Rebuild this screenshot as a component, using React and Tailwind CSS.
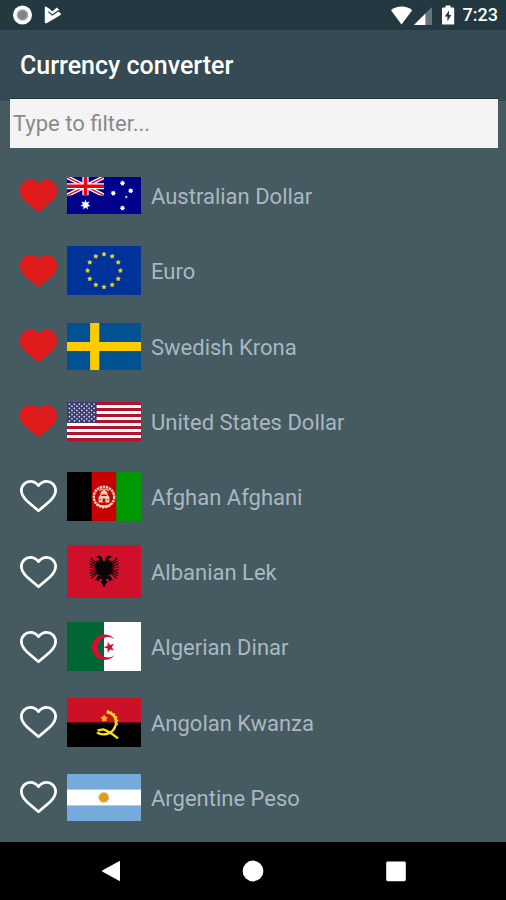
import { useState } from "react";

const starPoints = (cx, cy, r, inner = 0.4, n = 5, turn = -90) =>
  Array.from({ length: n * 2 }, (_, i) => {
    const a = ((turn + (i * 180) / n) * Math.PI) / 180;
    const d = i % 2 ? r * inner : r;
    return `${(cx + d * Math.cos(a)).toFixed(2)},${(cy + d * Math.sin(a)).toFixed(2)}`;
  }).join(" ");

const Flag = ({ h, children }) => (
  <svg viewBox={`0 0 74 ${h}`} width="74" height={h} className="shrink-0" aria-hidden="true">
    {children}
  </svg>
);

const Australia = () => (
  <Flag h={37}>
    <rect width="74" height="37" fill="#00008b" />
    <svg width="37" height="18.5" viewBox="0 0 37 18.5">
      <path d="M0 0 37 18.5M37 0 0 18.5" stroke="#fff" strokeWidth="4" />
      <path d="M0 0 37 18.5M37 0 0 18.5" stroke="#f00020" strokeWidth="1.4" />
      <path d="M18.5 0V18.5M0 9.25H37" stroke="#fff" strokeWidth="6.2" />
      <path d="M18.5 0V18.5M0 9.25H37" stroke="#f00010" strokeWidth="3.6" />
    </svg>
    <polygon points={starPoints(18.5, 27.8, 5.2, 0.5, 7)} fill="#fff" />
    <polygon points={starPoints(55.5, 6.2, 2.7, 0.65, 7)} fill="#fff" />
    <polygon points={starPoints(46.3, 16.2, 2.7, 0.65, 7)} fill="#fff" />
    <polygon points={starPoints(63.7, 13.8, 2.7, 0.65, 7)} fill="#fff" />
    <polygon points={starPoints(55.5, 31, 2.7, 0.65, 7)} fill="#fff" />
    <polygon points={starPoints(59.3, 20, 1.7)} fill="#fff" />
  </Flag>
);

const Europe = () => (
  <Flag h={49}>
    <rect width="74" height="49" fill="#003399" />
    {Array.from({ length: 12 }, (_, i) => {
      const a = (i * Math.PI) / 6;
      return (
        <polygon
          key={i}
          points={starPoints(37 + 16.4 * Math.sin(a), 24.6 - 16.4 * Math.cos(a), 2.6, 0.65)}
          fill="#dcc634"
        />
      );
    })}
  </Flag>
);

const Sweden = () => (
  <Flag h={47}>
    <rect width="74" height="47" fill="#005293" />
    <path d="M27.7 0V47M0 23.5H74" stroke="#fecb00" strokeWidth="9.2" />
  </Flag>
);

const UnitedStates = () => (
  <Flag h={39}>
    <rect width="74" height="39" fill="#fff" />
    {[0, 6, 12, 18, 24, 30, 36].map((y) => (
      <rect key={y} y={y} width="74" height="3" fill="#b2122c" />
    ))}
    <rect width="29.6" height="21" fill="#3c3b6e" />
    {Array.from({ length: 9 }, (_, r) =>
      Array.from({ length: r % 2 ? 5 : 6 }, (_, c) => (
        <circle
          key={`${r}-${c}`}
          cx={2.5 + c * 4.92 + (r % 2 ? 2.46 : 0)}
          cy={2.1 + r * 2.1}
          r="0.85"
          fill="#d8d8ea"
        />
      )),
    )}
  </Flag>
);

const Afghanistan = () => (
  <Flag h={49}>
    <rect width="25" height="49" fill="#000" />
    <rect x="24.7" width="24.8" height="49" fill="#c80000" />
    <rect x="49.3" width="24.7" height="49" fill="#009a00" />
    <g fill="none" stroke="#f6d5bd">
      <circle cx="37" cy="25" r="10.2" strokeWidth="2.4" strokeDasharray="2.4 0.7" />
      <path d="M30 31.5C32 35 42 35 44 31.5" strokeWidth="1.8" />
      <path d="M32 19C34 16.4 40 16.4 42 19" strokeWidth="1.1" />
    </g>
    <path
      d="M37 17.8C39.8 19 41 21 40.6 23L42.4 25V30.5H31.6V25L33.4 23C33 21 34.2 19 37 17.8Z"
      fill="#f6d5bd"
    />
    <path d="M35.6 30.5V26.6H38.4V30.5ZM34.4 22.6H39.6V24H34.4Z" fill="#c80000" />
    <path d="M32.6 27.6H34.2M39.8 27.6H41.4" stroke="#c80000" strokeWidth="1" />
  </Flag>
);

const Albania = () => (
  <Flag h={53}>
    <rect width="74" height="53" fill="#d0102a" />
    <g fill="#0a0205">
      <path d="M37 17.2 35.6 14.8 35 12 32.2 10.4 28.6 12 31 12.8 32.6 14.4 31 16 28.6 15.4 29.2 18 28.6 20 28.6 27 31 29.4 34.2 31 33.4 33.6 35.4 34.6 33.4 37.2 35 38.6 37 42.6 39 38.6 40.6 37.2 38.6 34.6 40.6 33.6 39.8 31 43 29.4 45.4 27 45.4 20 44.8 18 45.4 15.4 43 16 41.4 14.4 43 12.8 45.4 12 41.8 10.4 39 12 38.4 14.8Z" />
      <path d="M31.4 30 28 35.4 30.2 34.8 30.8 37 34.6 32ZM42.6 30 46 35.4 43.8 34.8 43.2 37 39.4 32Z" />
    </g>
    <g stroke="#0a0205" strokeWidth="1.2">
      <path d="M28.8 17.6 23.6 13M28.8 19.6 22.8 16M28.8 21.4 22.6 19M28.8 23 22.4 22M28.8 24.6 22.4 25M28.8 26 22.6 28M29.2 27.4 23.2 30.8M30 28.6 24.2 33.4" />
      <path d="M45.2 17.6 50.4 13M45.2 19.6 51.2 16M45.2 21.4 51.4 19M45.2 23 51.6 22M45.2 24.6 51.6 25M45.2 26 51.4 28M44.8 27.4 50.8 30.8M44 28.6 49.8 33.4" />
    </g>
  </Flag>
);

const Algeria = () => (
  <Flag h={49}>
    <rect width="74" height="49" fill="#fff" />
    <rect width="37" height="49" fill="#006633" />
    <path d="M47.4 17.2A12.7 12.7 0 1 0 47.4 33.2A10.2 10.2 0 1 1 47.4 17.2Z" fill="#d21034" />
    <polygon points={starPoints(42.4, 25.2, 5.8, 0.4, 5, 180)} fill="#d21034" />
  </Flag>
);

const Angola = () => (
  <Flag h={49}>
    <rect width="74" height="49" fill="#000" />
    <rect width="74" height="24.5" fill="#cc1126" />
    <path
      d="M39.6 14C46.6 15 50 20.4 48.8 26.4C47.6 31.6 44 35 39.4 36C35.6 36.8 32.4 36 30 34.4"
      fill="none"
      stroke="#f7e017"
      strokeWidth="2.4"
    />
    <path
      d="M40 12.8C48.4 14 52 20.8 49.8 27.6"
      fill="none"
      stroke="#f7e017"
      strokeWidth="1.6"
      strokeDasharray="1.8 1.8"
    />
    <path d="M30.6 32.4 36 31.4C41 32.6 45.4 36 51 40.4" fill="none" stroke="#f7e017" strokeWidth="2.4" />
    <polygon points={starPoints(37.2, 20.4, 3.8, 0.6)} fill="#fbae17" />
  </Flag>
);

const Argentina = () => (
  <Flag h={47}>
    <rect width="74" height="47" fill="#75aadb" />
    <rect y="15.6" width="74" height="15.8" fill="#fff" />
    <polygon points={starPoints(36.8, 23.5, 6.2, 0.75, 16)} fill="#e9b765" />
    <circle cx="36.8" cy="23.5" r="4.4" fill="#e39a1b" />
  </Flag>
);

const CURRENCIES = [
  ["Australian Dollar", Australia],
  ["Euro", Europe],
  ["Swedish Krona", Sweden],
  ["United States Dollar", UnitedStates],
  ["Afghan Afghani", Afghanistan],
  ["Albanian Lek", Albania],
  ["Algerian Dinar", Algeria],
  ["Angolan Kwanza", Angola],
  ["Argentine Peso", Argentina],
];

const Heart = ({ filled }) => (
  <svg viewBox="0 0 38 34" width="38" height="34" aria-hidden="true">
    {filled ? (
      <path
        d="M18.5 4.4C21 1.8 23.9 .7 26.5 .7C32.5 .7 37 5.3 37 11.4C37 16.6 34.4 20 30.6 23.2L18.5 33.2L6.4 23.2C2.6 20 0 16.6 0 11.4C0 5.3 4.5 .7 10.5 .7C13.1 .7 16 1.8 18.5 4.4Z"
        fill="#e01b1b"
      />
    ) : (
      <path
        d="M18.5 6.6C21 3.4 23.9 2.3 26.5 2.3C31.5 2.3 35.6 6.3 35.6 11.6C35.6 16 33.1 19.2 29.7 22.2L18.5 31.8L7.3 22.2C3.9 19.2 1.4 16 1.4 11.6C1.4 6.3 5.5 2.3 10.5 2.3C13.1 2.3 16 3.4 18.5 6.6Z"
        fill="none"
        stroke="#fff"
        strokeWidth="2.8"
        strokeLinejoin="round"
      />
    )}
  </svg>
);

function StatusBar() {
  return (
    <div className="flex h-[30px] items-center justify-between bg-[#233840] pr-2 pl-3">
      <div className="flex items-center gap-3">
        <svg width="20" height="20" viewBox="0 0 20 20" aria-hidden="true">
          <circle cx="10.5" cy="10" r="9.5" fill="#fff" />
          <circle cx="10.5" cy="10" r="5.8" fill="#9aa4a8" />
          <circle cx="10.5" cy="10" r="4.2" fill="#7a868b" />
        </svg>
        <svg width="18" height="18" viewBox="0 0 18 18" aria-hidden="true">
          <path
            d="M1.8 .6 5.8 3 8.2 5.6 12.8 1.4 15.4 4 14.2 5.6 16.6 7.2Q17.6 8.2 16.2 9.2L2.6 17.2Q.8 17.8 .8 16.2V1.8Q.8 .4 1.8 .6Z"
            fill="#fff"
          />
          <path d="M4.4 5.6 8.2 9 14.8 4.4" fill="none" stroke="#233840" strokeWidth="1.2" />
        </svg>
      </div>
      <div className="flex items-center">
        <svg width="22" height="20" viewBox="0 0 22 20" aria-hidden="true">
          <path d="M10.5 19.4 0 5.2C5.6 .2 15.6 .2 21.2 5.2Z" fill="#fff" />
        </svg>
        <svg className="ml-px" width="20" height="20" viewBox="0 0 20 20" aria-hidden="true">
          <path d="M18 2V20H0Z" fill="#66767d" />
          <path d="M11.4 8.6V20H0Z" fill="#fff" />
        </svg>
        <svg className="ml-2" width="13" height="20" viewBox="0 0 13 20" aria-hidden="true">
          <path
            d="M3.6 .6H8.6V2.4H11Q12.2 2.4 12.2 3.6V18.4Q12.2 19.6 11 19.6H1.2Q0 19.6 0 18.4V3.6Q0 2.4 1.2 2.4H3.6Z"
            fill="#fff"
          />
          <path d="M7 5.4 2.8 11.4H5.4V16.2L9.4 10H7Z" fill="#233840" />
        </svg>
        <span className="ml-2 text-[18px] leading-5 font-medium text-white">7:23</span>
      </div>
    </div>
  );
}

export default function App() {
  const [favourites, setFavourites] = useState(
    () => new Set(CURRENCIES.slice(0, 4).map(([name]) => name)),
  );

  const toggle = (name) =>
    setFavourites((current) => {
      const next = new Set(current);
      if (!next.delete(name)) next.add(name);
      return next;
    });

  return (
    <div className="flex min-h-screen flex-col bg-[#465a62] font-[Roboto,sans-serif]">
      <StatusBar />
      <header className="flex h-[71px] items-center bg-[#354a54] px-5">
        <h1 className="text-[25px] leading-8 font-medium text-white">Currency converter</h1>
      </header>
      <main className="-mt-[3px] flex flex-1 flex-col">
        <div className="pr-2 pl-[10px]">
          <input
            type="text"
            aria-label="Filter currencies"
            placeholder="Type to filter..."
            className="block h-[50px] w-full border-t border-[#1d3440] bg-[#f4f4f4] px-[3px] text-[22px] text-[#333] outline-none placeholder:text-[#8a8a8a]"
          />
        </div>
        <ul className="grid flex-1 auto-rows-fr pt-[10px] pb-[7px]">
          {CURRENCIES.map(([name, FlagImage]) => (
            <li key={name} className="flex items-center pl-5">
              <button
                type="button"
                aria-label={`Favourite ${name}`}
                aria-pressed={favourites.has(name)}
                onClick={() => toggle(name)}
                className="mr-[9px] shrink-0"
              >
                <Heart filled={favourites.has(name)} />
              </button>
              <FlagImage />
              <span className="ml-[10px] pt-[3px] text-[22px] leading-7 text-[#a9b8c0]">{name}</span>
            </li>
          ))}
        </ul>
      </main>
      <nav aria-label="System" className="flex h-[58px] items-center bg-black px-10">
        <button type="button" aria-label="Back" className="flex flex-1 justify-center">
          <svg width="22" height="22" viewBox="0 0 22 22" aria-hidden="true">
            <path d="M19 1.2Q20 .6 20 1.8V20.2Q20 21.4 19 20.8L2.6 11.8Q1.4 11 2.6 10.2Z" fill="#fff" />
          </svg>
        </button>
        <button type="button" aria-label="Home" className="flex flex-1 justify-center">
          <svg width="22" height="22" viewBox="0 0 22 22" aria-hidden="true">
            <circle cx="11" cy="11" r="10.4" fill="#fff" />
          </svg>
        </button>
        <button type="button" aria-label="Recent apps" className="flex flex-1 justify-center">
          <svg width="22" height="22" viewBox="0 0 22 22" aria-hidden="true">
            <rect x="2.2" y="1.6" width="19.6" height="19.6" rx="1.4" fill="#fff" />
          </svg>
        </button>
      </nav>
    </div>
  );
}
